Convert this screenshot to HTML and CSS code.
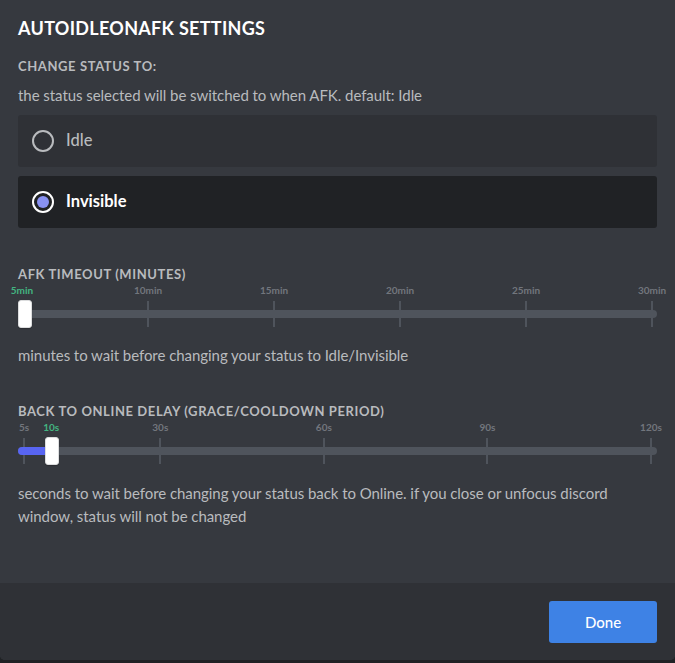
FILE: index.html
```html
<!DOCTYPE html>
<html>
<head>
<meta charset="utf-8">
<link rel="stylesheet" href="styles.css">
</head>
<body>
<div class="modal">
  <div class="content">
    <h2 class="title">AutoIdleOnAFK Settings</h2>

    <h5 class="label first">Change status to:</h5>
    <div class="desc">the status selected will be switched to when AFK. default: Idle</div>
    <div class="radio-group">
      <div class="option">
        <span class="radio"></span>
        <span class="option-text">Idle</span>
      </div>
      <div class="option selected">
        <span class="radio"><span class="dot"></span></span>
        <span class="option-text">Invisible</span>
      </div>
    </div>

    <h5 class="label afk">AFK Timeout (minutes)</h5>
    <div class="slider slider-afk">
      <div class="marks">
        <div class="mark active" style="left:0%"><span class="mark-label">5min</span><span class="tick"></span></div>
        <div class="mark" style="left:20%"><span class="mark-label">10min</span><span class="tick"></span></div>
        <div class="mark" style="left:40%"><span class="mark-label">15min</span><span class="tick"></span></div>
        <div class="mark" style="left:60%"><span class="mark-label">20min</span><span class="tick"></span></div>
        <div class="mark" style="left:80%"><span class="mark-label">25min</span><span class="tick"></span></div>
        <div class="mark" style="left:100%"><span class="mark-label">30min</span><span class="tick"></span></div>
      </div>
      <div class="track"><div class="fill" style="width:0px"></div></div>
      <div class="knob" style="left:0px"></div>
    </div>
    <div class="desc after-slider">minutes to wait before changing your status to Idle/Invisible</div>

    <h5 class="label online">Back to online delay (grace/cooldown period)</h5>
    <div class="slider slider-online">
      <div class="marks">
        <div class="mark" style="left:0%"><span class="mark-label">5s</span><span class="tick"></span></div>
        <div class="mark active" style="left:4.348%"><span class="mark-label">10s</span><span class="tick"></span></div>
        <div class="mark" style="left:21.739%"><span class="mark-label">30s</span><span class="tick"></span></div>
        <div class="mark" style="left:47.826%"><span class="mark-label">60s</span><span class="tick"></span></div>
        <div class="mark" style="left:73.913%"><span class="mark-label">90s</span><span class="tick"></span></div>
        <div class="mark" style="left:100%"><span class="mark-label">120s</span><span class="tick"></span></div>
      </div>
      <div class="track"><div class="fill" style="width:34px"></div></div>
      <div class="knob" style="left:27px"></div>
    </div>
    <div class="desc after-slider two-line">seconds to wait before changing your status back to Online. if you close or unfocus discord window, status will not be changed</div>
  </div>
  <div class="footer">
    <button class="done">Done</button>
  </div>
</div>
</body>
</html>
```

FILE: styles.css
```css
* { box-sizing: border-box; }
html, body {
  margin: 0;
  padding: 0;
  background: #202225;
}
body {
  font-family: "Lato", "Noto Sans", sans-serif;
  width: 675px;
  height: 663px;
  overflow: hidden;
}
.modal {
  width: 675px;
  height: 660px;
  background: #36393f;
  display: flex;
  flex-direction: column;
  border-radius: 0 0 5px 5px;
  overflow: hidden;
}
.content {
  flex: 1;
  padding: 18px 18px 0 18px;
}
.title {
  margin: 0;
  font-size: 18px;
  line-height: 20px;
  font-weight: 700;
  color: #ffffff;
  text-transform: uppercase;
  letter-spacing: 0.3px;
}
.label {
  margin: 0;
  font-size: 13px;
  line-height: 16px;
  font-weight: 700;
  color: #b9bbbe;
  text-transform: uppercase;
  letter-spacing: 0.6px;
}
.label.first { margin-top: 20px; }
.desc {
  margin-top: 11px;
  font-size: 15px;
  line-height: 20px;
  color: #b9bbbe;
  letter-spacing: -0.05px;
}
.radio-group {
  margin-top: 10px;
  display: flex;
  flex-direction: column;
  gap: 9px;
}
.option {
  height: 52px;
  border-radius: 3px;
  background: #2f3136;
  display: flex;
  align-items: center;
  padding: 0 14px;
  gap: 12px;
}
.option.selected { background: #202225; }
.radio {
  width: 22px;
  height: 22px;
  border-radius: 50%;
  border: 2px solid #b9bbbe;
  display: flex;
  align-items: center;
  justify-content: center;
  flex: none;
  margin-top: -1px;
}
.option.selected .radio { border-color: #ffffff; }
.dot {
  width: 12px;
  height: 12px;
  border-radius: 50%;
  background: #8891f2;
}
.option-text {
  font-size: 16.5px;
  line-height: 20px;
  font-weight: 500;
  color: #b9bbbe;
  margin-top: -3px;
}
.option.selected .option-text {
  color: #ffffff;
  font-weight: 700;
}
.label.afk { margin-top: 38px; }
.label.online { margin-top: 38px; }
.slider {
  position: relative;
  height: 46px;
  margin-top: 1px;
}
.marks {
  position: absolute;
  top: 0;
  bottom: 0;
}
.slider-afk .marks { left: 4px; right: 5px; }
.slider-online .marks { left: 6px; right: 6px; }
.mark {
  position: absolute;
  top: 0;
  width: 0;
  height: 100%;
}
.mark-label {
  position: absolute;
  top: 0;
  left: 0;
  transform: translateX(-50%);
  font-size: 10px;
  line-height: 14px;
  font-weight: 700;
  color: #72767d;
  white-space: nowrap;
}
.mark.active .mark-label { color: #43b581; }
.tick {
  position: absolute;
  top: 18px;
  left: -1px;
  width: 2px;
  height: 26px;
  background: #4f545c;
}
.track {
  position: absolute;
  left: 0;
  right: 0;
  top: 27px;
  height: 8px;
  border-radius: 4px;
  background: #4f545c;
}
.fill {
  height: 100%;
  border-radius: 4px 0 0 4px;
  background: #5865f2;
}
.knob {
  position: absolute;
  top: 17px;
  width: 14px;
  height: 28px;
  border-radius: 3px;
  background: #ffffff;
  border: 1px solid #dcddde;
  box-shadow: 0 1px 1px rgba(0,0,0,0.2);
}
.desc.after-slider { margin-top: 16px; }
.desc.two-line { line-height: 23px; }
.footer {
  height: 77px;
  flex: none;
  background: #2f3136;
  display: flex;
  justify-content: flex-end;
  align-items: center;
  padding: 0 18px;
}
.done {
  width: 108px;
  height: 42px;
  border: none;
  border-radius: 3px;
  background: #3e82e5;
  color: #ffffff;
  font-family: "Lato", "Noto Sans", sans-serif;
  font-size: 15px;
  font-weight: 500;
  margin-top: 1px;
}
```
